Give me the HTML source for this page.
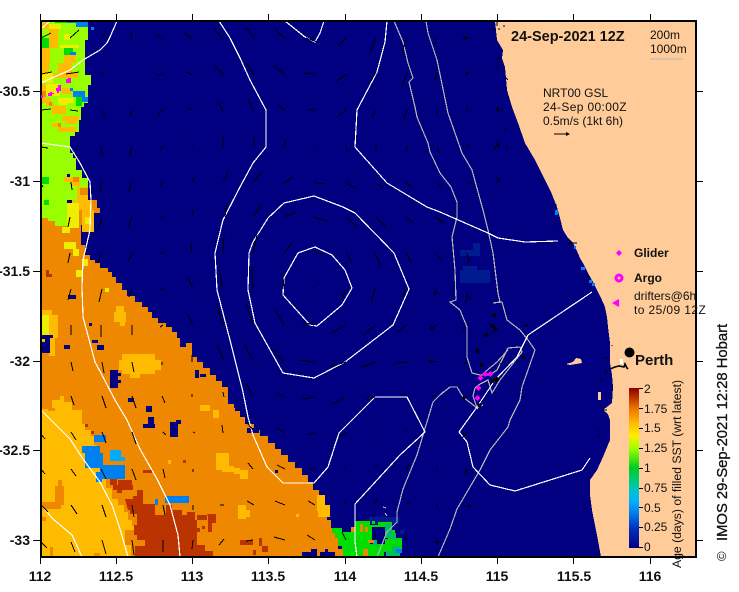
<!DOCTYPE html>
<html><head><meta charset="utf-8"><style>
html,body{margin:0;padding:0;background:#fff;width:739px;height:592px;overflow:hidden}
svg{display:block;font-family:"Liberation Sans",sans-serif}
.c{shape-rendering:crispEdges}
.l{fill:none;stroke:#fff;stroke-width:1.2}
.g{fill:none;stroke:#b4b4b4;stroke-width:1.2}
.a path{fill:none;stroke:#000;stroke-width:1;marker-end:url(#h)}
.b{font-weight:bold;font-size:14px;fill:#111}
.t{font-size:12px;fill:#111}
</style></head><body>
<svg width="739" height="592" viewBox="0 0 739 592" xmlns="http://www.w3.org/2000/svg">
<defs>
<marker id="h" markerUnits="userSpaceOnUse" markerWidth="6" markerHeight="6" refX="3" refY="2" orient="auto"><path d="M0 0L4 2L0 4z" fill="#000" stroke="none"/></marker>
<linearGradient id="cb" x1="0" y1="1" x2="0" y2="0">
<stop offset="0" stop-color="#000080"/><stop offset=".12" stop-color="#0030c0"/><stop offset=".22" stop-color="#0080ee"/><stop offset=".3" stop-color="#00b4ff"/><stop offset=".38" stop-color="#00c8b0"/><stop offset=".5" stop-color="#00cc20"/><stop offset=".62" stop-color="#99ff00"/><stop offset=".7" stop-color="#ffee00"/><stop offset=".78" stop-color="#ffbb00"/><stop offset=".87" stop-color="#ee7700"/><stop offset=".94" stop-color="#bb3300"/><stop offset="1" stop-color="#880000"/>
</linearGradient>
</defs>
<rect x="41" y="21" width="654" height="536" fill="#000080"/>
<g class="c">
<!-- land -->
<polygon fill="#ffcc99" points="495,21 497,40 503,50 502,58 505,67 507,90 512,107 518,123 525,143 535,160 545,180 551,192 557,207 560,218 563,230 568,238 573,243 577,251 580,258 584,265 588,273 593,282 597,290 601,298 605,307 607,317 608,327 610,343 610,363 612,375 613,387 612,403 603,410 608,414 610,420 610,440 603,457 597,470 590,480 590,495 592,510 597,535 601,557 695,557 695,21"/>
<polygon fill="#ffcc99" points="566,364 573,362 576,358 581,359 582,363 576,364 570,365"/>
<rect x="598" y="392" width="3" height="8" fill="#ffcc99"/>
<!-- lighter patches in navy -->
<g fill="#001a90"><rect x="460" y="270" width="30" height="13"/><rect x="463" y="266" width="14" height="5"/><rect x="473" y="243" width="7" height="13"/><rect x="460" y="250" width="18" height="6"/><rect x="369" y="517" width="30" height="7"/><rect x="400" y="530" width="4" height="4"/></g>
<g fill="#0080ee"><rect x="555" y="210" width="3" height="5"/><rect x="581" y="267" width="4" height="3"/><rect x="589" y="280" width="3" height="3"/><rect x="592" y="283" width="3" height="3"/><rect x="574" y="246" width="2" height="3"/></g>
<!-- orange -->
<path fill="#ee8800" d="M41 215H72V200H97V208H100V213H94V232H85V225H81V245H85V255H90V260H95V263H100V268H108V272H112V277H116V283H122V290H127V296H135V302H142V307H148V312H152V318H158V323H166V327H172V332H177V338H180V343H192V357H197V362H203V368H210V375H216V381H222V387H228V399H234V408H240V417H245V424H254V430H260V436H268V443H275V449H281V455H288V462H295V468H302V475H308V482H313V490H319V497H324V508H327V520H331V528H338V557H41Z"/>
<!-- light orange SW -->
<path fill="#ffbb00" d="M41 409H52V400H60V396H64V402H72V410H82V424H85V430H91V436H94V445H97V455H100V465H103V476H106V488H112V499H118V505H124V512H128V520H132V526H135V540H131V557H41Z"/>
<g fill="#ffbb00"><rect x="122" y="354" width="33" height="20"/><rect x="119" y="360" width="42" height="10"/><rect x="130" y="374" width="10" height="4"/><rect x="116" y="306" width="8" height="6"/><rect x="114" y="312" width="12" height="10"/><rect x="120" y="322" width="5" height="4"/><rect x="41" y="310" width="11" height="5"/><rect x="49" y="315" width="9" height="23"/><rect x="49" y="338" width="6" height="18"/><rect x="200" y="405" width="10" height="6"/><rect x="213" y="410" width="6" height="8"/><rect x="216" y="453" width="13" height="17"/><rect x="222" y="466" width="12" height="6"/><rect x="234" y="468" width="6" height="6"/><rect x="240" y="470" width="8" height="9"/><rect x="317" y="495" width="8" height="16"/><rect x="318" y="505" width="12" height="12"/><rect x="240" y="510" width="10" height="7"/><rect x="296" y="514" width="3" height="3"/><rect x="168" y="460" width="3" height="4"/><rect x="238" y="505" width="8" height="14"/></g>
<g fill="#ee8800"><rect x="55" y="486" width="9" height="19"/><rect x="58" y="480" width="4" height="8"/><rect x="41" y="517" width="5" height="4"/><rect x="50" y="547" width="3" height="10"/><rect x="94" y="553" width="6" height="4"/><rect x="41" y="502" width="20" height="7"/><rect x="48" y="408" width="7" height="3"/><rect x="125" y="530" width="12" height="15"/></g>
<!-- dark red -->
<path fill="#bb3300" d="M125 499H133V496H137V490H143V504H155V515H166V505H172V510H182V515H187V512H195V520H207V514H216V523H212V532H208V515H197V545H205V551H213V557H135V546H145V540H137V535H134V525H137V514H130V510H128Z"/>
<g fill="#bb3300"><rect x="46" y="270" width="3" height="7"/><rect x="46" y="274" width="6" height="3"/><rect x="85" y="424" width="3" height="3"/><rect x="91" y="431" width="3" height="3"/><rect x="143" y="470" width="9" height="3"/><rect x="183" y="460" width="3" height="3"/><rect x="110" y="478" width="7" height="7"/><rect x="118" y="480" width="14" height="5"/><rect x="113" y="485" width="20" height="5"/><rect x="117" y="488" width="5" height="5"/><rect x="240" y="540" width="13" height="5"/><rect x="259" y="538" width="3" height="8"/><rect x="262" y="546" width="6" height="6"/><rect x="253" y="550" width="3" height="5"/><rect x="196" y="528" width="4" height="4"/><rect x="202" y="526" width="3" height="3"/></g>
<!-- navy in orange -->
<g fill="#000080"><rect x="68" y="295" width="8" height="4"/><rect x="89" y="323" width="3" height="3"/><rect x="92" y="340" width="6" height="3"/><rect x="97" y="345" width="7" height="5"/><rect x="64" y="345" width="6" height="4"/><rect x="110" y="370" width="8" height="18"/><rect x="118" y="373" width="3" height="3"/><rect x="118" y="380" width="3" height="3"/><rect x="195" y="370" width="4" height="8"/><rect x="200" y="374" width="6" height="3"/><rect x="180" y="343" width="6" height="4"/><rect x="128" y="398" width="6" height="4"/><rect x="146" y="406" width="6" height="6"/><rect x="148" y="417" width="6" height="8"/><rect x="143" y="424" width="12" height="4"/><rect x="170" y="422" width="8" height="15"/><rect x="176" y="420" width="5" height="4"/><rect x="228" y="392" width="12" height="12"/><rect x="235" y="403" width="5" height="8"/><rect x="247" y="428" width="12" height="5"/><rect x="275" y="470" width="3" height="3"/><rect x="302" y="552" width="14" height="5"/><rect x="311" y="549" width="6" height="8"/><rect x="320" y="552" width="15" height="5"/><rect x="325" y="549" width="3" height="3"/></g>
<!-- blue patches -->
<g fill="#0080ee"><rect x="94" y="435" width="12" height="7"/><rect x="82" y="446" width="18" height="7"/><rect x="85" y="453" width="18" height="15"/><rect x="100" y="465" width="25" height="14"/><rect x="96" y="472" width="6" height="10"/><rect x="165" y="496" width="24" height="7"/><rect x="155" y="499" width="3" height="6"/></g>
<g fill="#00aaff"><rect x="110" y="450" width="11" height="8"/><rect x="110" y="457" width="15" height="4"/></g>
<!-- lime -->
<path fill="#99ff00" d="M41 21H88V40H85V75H91V85H88V103H84V107H81V120H79V132H75V136H70V153H73V158H76V170H82V178H88V200H67V226H55V221H48V218H41Z"/>
<g fill="#ffbb00"><rect x="41" y="21" width="8" height="8"/><rect x="49" y="29" width="9" height="19"/><rect x="41" y="48" width="9" height="15"/><rect x="41" y="63" width="8" height="10"/><rect x="58" y="63" width="14" height="10"/><rect x="64" y="55" width="12" height="8"/><rect x="52" y="73" width="26" height="5"/><rect x="41" y="84" width="5" height="14"/><rect x="62" y="88" width="10" height="6"/><rect x="41" y="98" width="10" height="5"/><rect x="46" y="103" width="8" height="3"/><rect x="52" y="106" width="14" height="8"/><rect x="62" y="116" width="17" height="5"/><rect x="66" y="121" width="10" height="3"/><rect x="52" y="123" width="8" height="4"/><rect x="58" y="127" width="18" height="5"/><rect x="64" y="177" width="16" height="5"/><rect x="70" y="182" width="10" height="4"/><rect x="77" y="187" width="11" height="13"/><rect x="72" y="200" width="19" height="10"/><rect x="82" y="210" width="12" height="22"/></g>
<g fill="#eeee00"><rect x="49" y="24" width="12" height="5"/><rect x="64" y="34" width="6" height="6"/><rect x="60" y="45" width="19" height="3"/><rect x="41" y="73" width="12" height="10"/><rect x="46" y="84" width="14" height="12"/><rect x="58" y="98" width="15" height="5"/><rect x="58" y="103" width="10" height="2"/><rect x="67" y="203" width="12" height="25"/><rect x="62" y="227" width="8" height="6"/><rect x="64" y="242" width="12" height="7"/><rect x="73" y="249" width="6" height="7"/><rect x="82" y="259" width="6" height="7"/><rect x="76" y="270" width="6" height="7"/><rect x="41" y="315" width="8" height="20"/><rect x="85" y="217" width="5" height="7"/><rect x="105" y="288" width="4" height="4"/></g>
<g fill="#00dd00"><rect x="41" y="38" width="8" height="10"/><rect x="64" y="48" width="9" height="7"/><rect x="55" y="21" width="12" height="2"/><rect x="76" y="97" width="6" height="9"/><rect x="41" y="177" width="8" height="7"/><rect x="44" y="200" width="5" height="5"/></g>
<g fill="#ee8800"><rect x="41" y="91" width="5" height="6"/><rect x="49" y="102" width="3" height="4"/><rect x="58" y="123" width="3" height="4"/><rect x="73" y="177" width="6" height="5"/><rect x="80" y="188" width="8" height="7"/></g>
<g fill="#0080ee"><rect x="76" y="21" width="12" height="6"/><rect x="67" y="21" width="10" height="2"/><rect x="91" y="27" width="3" height="3"/><rect x="70" y="52" width="6" height="3"/><rect x="73" y="91" width="12" height="6"/><rect x="70" y="88" width="3" height="3"/><rect x="82" y="97" width="6" height="5"/></g>
<g fill="#000080"><rect x="67" y="174" width="3" height="3"/><rect x="41" y="335" width="9" height="18"/><rect x="50" y="335" width="3" height="3"/></g>
<rect x="42" y="339" width="3" height="3" fill="#ffbb00"/>
<!-- green at south -->
<path fill="#00dd00" d="M332 528H342V532H355V521H370V525H378V521H392V530H395V538H402V552H384V557H342V546H338V538H335V533H332Z"/>
<rect x="372" y="527" width="13" height="15" fill="#000080"/><rect x="385" y="530" width="3" height="9" fill="#000080"/><rect x="376" y="520" width="16" height="2" fill="#001a90"/><rect x="370" y="542" width="15" height="2" fill="#000080"/>
<g fill="#00bb66"><rect x="385" y="524" width="7" height="14"/><rect x="390" y="533" width="6" height="6"/><rect x="392" y="546" width="8" height="10"/><rect x="386" y="551" width="8" height="5"/><rect x="373" y="540" width="4" height="6"/></g>
<rect x="396" y="549" width="6" height="4" fill="#0080ee"/><rect x="372" y="521" width="3" height="3" fill="#00dd00"/>
<g fill="#ee8800"><rect x="360" y="524" width="3" height="8"/><rect x="351" y="527" width="4" height="5"/><rect x="365" y="527" width="3" height="5"/><rect x="368" y="540" width="6" height="3"/><rect x="363" y="549" width="5" height="8"/><rect x="338" y="549" width="5" height="8"/></g>
</g>
<!-- grey bathymetry -->
<g class="c">
<path class="g" d="M394 21L403 42L408 63L413 78L409 82L415 107L417 117L428 143L430 152L440 173L451 187L457 202L457 217L452 237L455 270L456 300L450 302L460 310L467 327L467 357L472 373L480 375L490 375L497 370L508 348L520 347L522 352L518 357L500 380L492 393L488 380L480 384L475 388L473 396L477 408L463 397L457 387L450 387L440 395"/>
<path class="g" d="M426 21L428 33L437 60L448 113L462 153L472 170L483 210L488 230L493 253L498 293L500 302L493 303L502 302L507 320L520 330L528 340L535 350L528 370L522 387L520 400L510 420L508 427L490 450L480 470L457 509L450 529L438 557"/>
<path class="g" d="M443 392L433 402L417 455L403 489L397 512L397 522L387 532L377 557"/>
<path class="g" d="M477 408L483 405M485 372L497 362L508 350"/>
<path class="g" d="M383 507l3 1M385 513l2 3M650 59H683"/>
</g>
<!-- white contours -->
<g class="c">
<path class="l" d="M117 21L110 37L107 43L100 50L83 60L70 70L43 82L41 83"/>
<path class="l" d="M41 29L50 21"/>
<path class="l" d="M41 143L70 147L80 163L90 182L91 200L90 230L87 243L83 260L82 287L83 317L90 343L95 362L103 377L115 400L127 420L140 449L157 479L170 505L178 535L180 557"/>
<path class="l" d="M41 410L55 424L70 439L83 459L100 482L112 505L120 529L128 557"/>
<path class="l" d="M41 505L53 519L72 535L82 557"/>
<path class="l" d="M219 21L230 38L240 58L250 80L266 110V147L253 163L240 187L223 220L215 253L217 290L230 340L243 392L248 417L253 435L267 467L283 483H314L328 467L339 433L375 397H407L425 432L400 455L355 504V542L357 557"/>
<path class="l" d="M285 21L305 37L315 42L320 33L324 21"/>
<path class="l" d="M387 21L385 42L377 72L357 110L355 147L387 183L427 207L440 212L488 233L498 238L525 242L558 241"/>
<path class="l" d="M315 247L298 253L284 278L283 295L310 325L317 326L342 305L352 288L345 270L332 255Z"/>
<path class="l" d="M314 196L284 203L268 218L253 242L249 253L248 290L255 323L283 373L314 378L345 362L393 325L409 289L394 253L355 213L343 207Z"/>
<path class="l" d="M592 292L528 335L517 357L495 380L477 407L459 432L467 442L473 467L490 485L515 491L550 480L582 470L590 458"/>
</g>
<!-- arrows -->
<g class="a c">
<path d="M41 38L51 33M70 38L79 30M102 38L106 31M131 32L132 39M163 39L156 34M193 39L184 33M223 39L214 29M254 38L245 27M285 38L276 30M317 42L306 38M346 38L338 46M376 38L370 53M406 38L402 53M437 38L433 45M468 38L463 38"/>
<path d="M52 72L41 74M79 72L66 74M105 73L101 74M163 74L157 75M186 72L193 75M224 75L215 66M254 75L246 63M285 75L274 66M315 74L304 73M347 74L336 81M376 72L370 83M407 73L402 87M437 73L434 80M467 73L466 72"/>
<path d="M41 110L51 109M70 110L78 111M102 110L105 115M132 110L130 116M163 109L158 115M188 108L193 110M223 111L218 102M254 111L248 99M285 111L278 104M315 110L308 110M346 110L339 115M376 110L372 117M407 110L404 119M437 110L437 117M467 108L467 111M498 107L498 111"/>
<path d="M41 147L48 148M101 146L102 155M132 146L130 155M163 146L160 151M191 143L193 147M223 137L223 147M254 147L254 137M286 140L284 147M315 146L317 147M346 146L347 152M376 146L376 152M407 146L407 152M437 146L439 153M468 144L467 147M498 141L498 147"/>
<path d="M41 184L43 187M71 182L72 190M101 182L100 193M131 182L129 192M163 182L160 186M194 177L192 183M223 182L228 172M253 183L261 172M284 183L293 177M314 183L325 184M346 183L355 188M376 183L383 188M406 183L412 187M437 183L442 187M467 183L472 183M498 178L499 182"/>
<path d="M70 217L68 227M102 217L98 229M132 217L128 227M163 217L160 218M193 210L192 217M225 217L227 203M253 217L262 204M284 217L296 212M314 217L327 221M346 217L357 227M376 217L386 227M406 217L413 223M436 217L443 223"/>
<path d="M70 253L68 263M101 253L98 263M132 253L128 262M160 253L163 253M191 243L192 253M223 253L224 235M253 253L257 235M284 253L292 243M314 253L323 254M346 253L352 263M375 253L381 266M406 253L411 262M436 253L441 260M467 253L469 262"/>
<path d="M71 289L68 300M102 289L99 302M132 289L129 297M159 289L163 289M193 289L188 277M223 289L219 270M253 289L252 267M284 289L283 276M314 289L312 287M346 289L342 299M375 289L371 302M406 289L403 298M436 289L435 295"/>
<path d="M71 325L71 335M101 325L101 337M132 325L132 335M163 325L160 327M193 326L188 315M223 325L217 305M253 325L246 303M284 325L275 310M314 325L302 322M346 325L331 333M376 325L363 335M407 325L397 332M437 325L430 329"/>
<path d="M71 362L73 371M102 362L104 373M132 362L134 372M162 362L162 365M192 355L192 362M224 361L217 345M253 361L244 343M284 362L273 350M315 362L299 360M346 362L329 367M376 362L361 367M407 362L395 363M437 362L429 361"/>
<path d="M71 396L74 405M102 396L106 408M132 396L136 408M162 396L165 403M192 394L192 397M223 392L224 397M253 396L246 383M277 393L285 397M315 397L302 399M345 397L333 404M375 397L366 400M407 395L400 395M437 396L432 396M467 396L462 399"/>
<path d="M41 434L45 439M71 432L76 440M102 432L106 443M132 432L136 444M163 432L166 435M193 432L195 433M222 425L223 433M248 424L253 430M277 428L285 433M315 432L308 435M346 433L339 437M375 432L378 432M406 429L406 433M437 432L435 432M467 433L463 437"/>
<path d="M41 469L45 474M71 469L76 476M101 469L106 479M132 469L136 480M163 469L165 478M193 469L193 472M248 463L253 469M277 465L285 469M308 469L315 468M346 469L343 469M377 465L375 469M409 464L406 469M437 468L437 471M467 469L466 473"/>
<path d="M41 505L48 512M71 505L77 514M102 505L106 517M132 505L134 517M163 505L165 515M193 505L193 510M220 505L224 505M247 501L254 505M275 501L285 505M308 501L315 505M344 500L346 505M377 499L375 505M409 502L406 505M437 504L437 508M468 505L470 507"/>
<path d="M41 542L47 548M71 542L75 552M102 540L106 554M132 540L134 555M163 540L163 552M193 540L192 549M224 539L219 545M253 540L246 541M285 540L274 537M315 540L307 535M346 540L342 532M375 539L375 532M406 540L405 536M437 540L437 544"/>
<path d="M467 293L466 303M466 327L462 330M523 326L528 325M471 300L469 296M497 330L491 333M463 364L468 362M500 364L506 361M520 356L525 358"/>
</g>
<path d="M554 134H569" stroke="#000" fill="none" class="c" marker-end="url(#h)"/>
<!-- small coastal ticks -->
<path d="M497 22v4M503 26h2M492 30h3M497 60l3-3M498 63l2-2M495 67h3M505 90h2M500 110h3M505 127v3M507 145v4M495 146v4M540 182h3M568 243h6M572 244l-4-1M556 224h3M556 204v3M573 250v2M587 274l2 3M604 358h4M607 371l-3 2M599 380h3M602 410h5M598 436h3M598 430v2M612 345v1" stroke="#000" fill="none" class="c"/>
<path d="M573 243h4M498 29h2M490 40h2M506 78l2 2" stroke="#000" class="c"/>
<!-- frame -->
<g class="c" fill="#000">
<rect x="40" y="20" width="656" height="2"/><rect x="40" y="556" width="656" height="2"/><rect x="40" y="20" width="2" height="538"/><rect x="695" y="20" width="2" height="538"/>
<rect x="116" y="14" width="1" height="6"/><rect x="192" y="14" width="1" height="6"/><rect x="268" y="14" width="1" height="6"/><rect x="345" y="14" width="1" height="6"/><rect x="421" y="14" width="1" height="6"/><rect x="497" y="14" width="1" height="6"/><rect x="573" y="14" width="1" height="6"/><rect x="650" y="14" width="1" height="6"/><rect x="40" y="14" width="1" height="6"/>
<rect x="40" y="558" width="1" height="6"/><rect x="116" y="558" width="1" height="6"/><rect x="192" y="558" width="1" height="6"/><rect x="268" y="558" width="1" height="6"/><rect x="345" y="558" width="1" height="6"/><rect x="421" y="558" width="1" height="6"/><rect x="497" y="558" width="1" height="6"/><rect x="573" y="558" width="1" height="6"/><rect x="650" y="558" width="1" height="6"/>
<rect x="33" y="91" width="7" height="1"/><rect x="33" y="181" width="7" height="1"/><rect x="33" y="271" width="7" height="1"/><rect x="33" y="361" width="7" height="1"/><rect x="33" y="450" width="7" height="1"/><rect x="33" y="540" width="7" height="1"/>
<rect x="697" y="91" width="6" height="1"/><rect x="697" y="181" width="6" height="1"/><rect x="697" y="271" width="6" height="1"/><rect x="697" y="361" width="6" height="1"/><rect x="697" y="450" width="6" height="1"/><rect x="697" y="540" width="6" height="1"/>
</g>
<!-- axis labels -->
<g class="b" text-anchor="end">
<text x="30" y="96">-30.5</text><text x="30" y="186">-31</text><text x="30" y="276">-31.5</text><text x="30" y="366">-32</text><text x="30" y="455">-32.5</text><text x="30" y="545">-33</text>
</g>
<g class="b" text-anchor="middle">
<text x="40" y="581">112</text><text x="116" y="581">112.5</text><text x="192" y="581">113</text><text x="268" y="581">113.5</text><text x="345" y="581">114</text><text x="421" y="581">114.5</text><text x="497" y="581">115</text><text x="574" y="581">115.5</text><text x="650" y="581">116</text>
</g>
<!-- title and legend -->
<text x="511" y="41" font-size="14.5" font-weight="bold" fill="#111">24-Sep-2021 12Z</text>
<text x="650" y="39" class="t">200m</text><text x="650" y="53" class="t">1000m</text>
<text x="543" y="97" class="t">NRT00 GSL</text><text x="543" y="111" class="t" letter-spacing=".35">24-Sep 00:00Z</text><text x="543" y="125" class="t">0.5m/s (1kt 6h)</text>
<text x="634" y="257" font-size="12" font-weight="bold" fill="#111">Glider</text>
<text x="634" y="282" font-size="12" font-weight="bold" fill="#111">Argo</text>
<text x="634" y="300" class="t">drifters@6h</text><text x="634" y="314" class="t" letter-spacing=".4">to 25/09 12Z</text>
<polygon points="619,250 622,253 619,256 616,253" fill="#f0f"/>
<circle cx="619" cy="278" r="3" fill="none" stroke="#f0f" stroke-width="3"/>
<path d="M619 300l-5 3 5 3M618 302v2" stroke="#f0f" stroke-width="2" fill="#f0f"/>
<circle cx="629.5" cy="352.5" r="5" fill="#000"/>
<text x="635" y="365" font-size="15" font-weight="bold" fill="#111">Perth</text>
<path d="M610 369l5-2 4-1 5 1 1-3 2 4 1 1" stroke="#000" fill="none" stroke-width="1.6"/>
<rect x="620" y="359" width="3" height="5" fill="#fff"/>
<!-- colourbar -->
<rect x="629" y="388" width="10" height="160" fill="url(#cb)"/>
<g class="c" fill="#000"><rect x="639" y="388" width="4" height="1"/><rect x="639" y="408" width="4" height="1"/><rect x="639" y="428" width="4" height="1"/><rect x="639" y="448" width="4" height="1"/><rect x="639" y="468" width="4" height="1"/><rect x="639" y="488" width="4" height="1"/><rect x="639" y="507" width="4" height="1"/><rect x="639" y="527" width="4" height="1"/><rect x="639" y="547" width="4" height="1"/></g>
<g class="t"><text x="644" y="393">2</text><text x="644" y="413">1.75</text><text x="644" y="432">1.5</text><text x="644" y="452">1.25</text><text x="644" y="472">1</text><text x="644" y="492">0.75</text><text x="644" y="512">0.5</text><text x="644" y="531">0.25</text><text x="644" y="551">0</text></g>
<text transform="translate(681 568) rotate(-90)" font-size="12.2" fill="#111">Age (days) of filled SST (wrt latest)</text>
<text transform="translate(726 561) rotate(-90)" font-size="13" fill="#111">©</text>
<text transform="translate(727 541) rotate(-90)" font-size="14.8" fill="#111" stroke="#111" stroke-width=".3">IMOS 29-Sep-2021 12:28 Hobart</text>
<!-- markers -->
<g fill="#000"><circle cx="494.5" cy="315" r="2"/><circle cx="492" cy="326" r="2"/><circle cx="495.5" cy="329" r="2"/><circle cx="486.5" cy="335" r="2"/><circle cx="477.5" cy="351" r="2"/><circle cx="481.5" cy="365" r="2"/><circle cx="496.5" cy="379.5" r="2.5"/><circle cx="492.5" cy="381" r="2"/><circle cx="479.5" cy="405.5" r="2"/></g>
<g fill="#f0f"><polygon points="485,371 488,374 485,377 482,374"/><polygon points="490.500,371 493.500,374 490.500,377 487.500,374"/><polygon points="480.500,375 483.500,378 480.500,381 477.500,378"/><polygon points="478.500,385 481.500,388 478.500,391 475.500,388"/><polygon points="477.500,395 480.500,398 477.500,401 474.500,398"/>
<rect x="66" y="79" width="5" height="4"/><rect x="68" y="78" width="3" height="3"/><rect x="56" y="88" width="5" height="3"/><rect x="58" y="85" width="3" height="3"/><rect x="48" y="93" width="4" height="3"/><rect x="50" y="92" width="2" height="4"/><rect x="41" y="95" width="2" height="3"/><rect x="57" y="90" width="2" height="3"/><rect x="50" y="93" width="4" height="1"/></g>
</svg>
</body></html>
